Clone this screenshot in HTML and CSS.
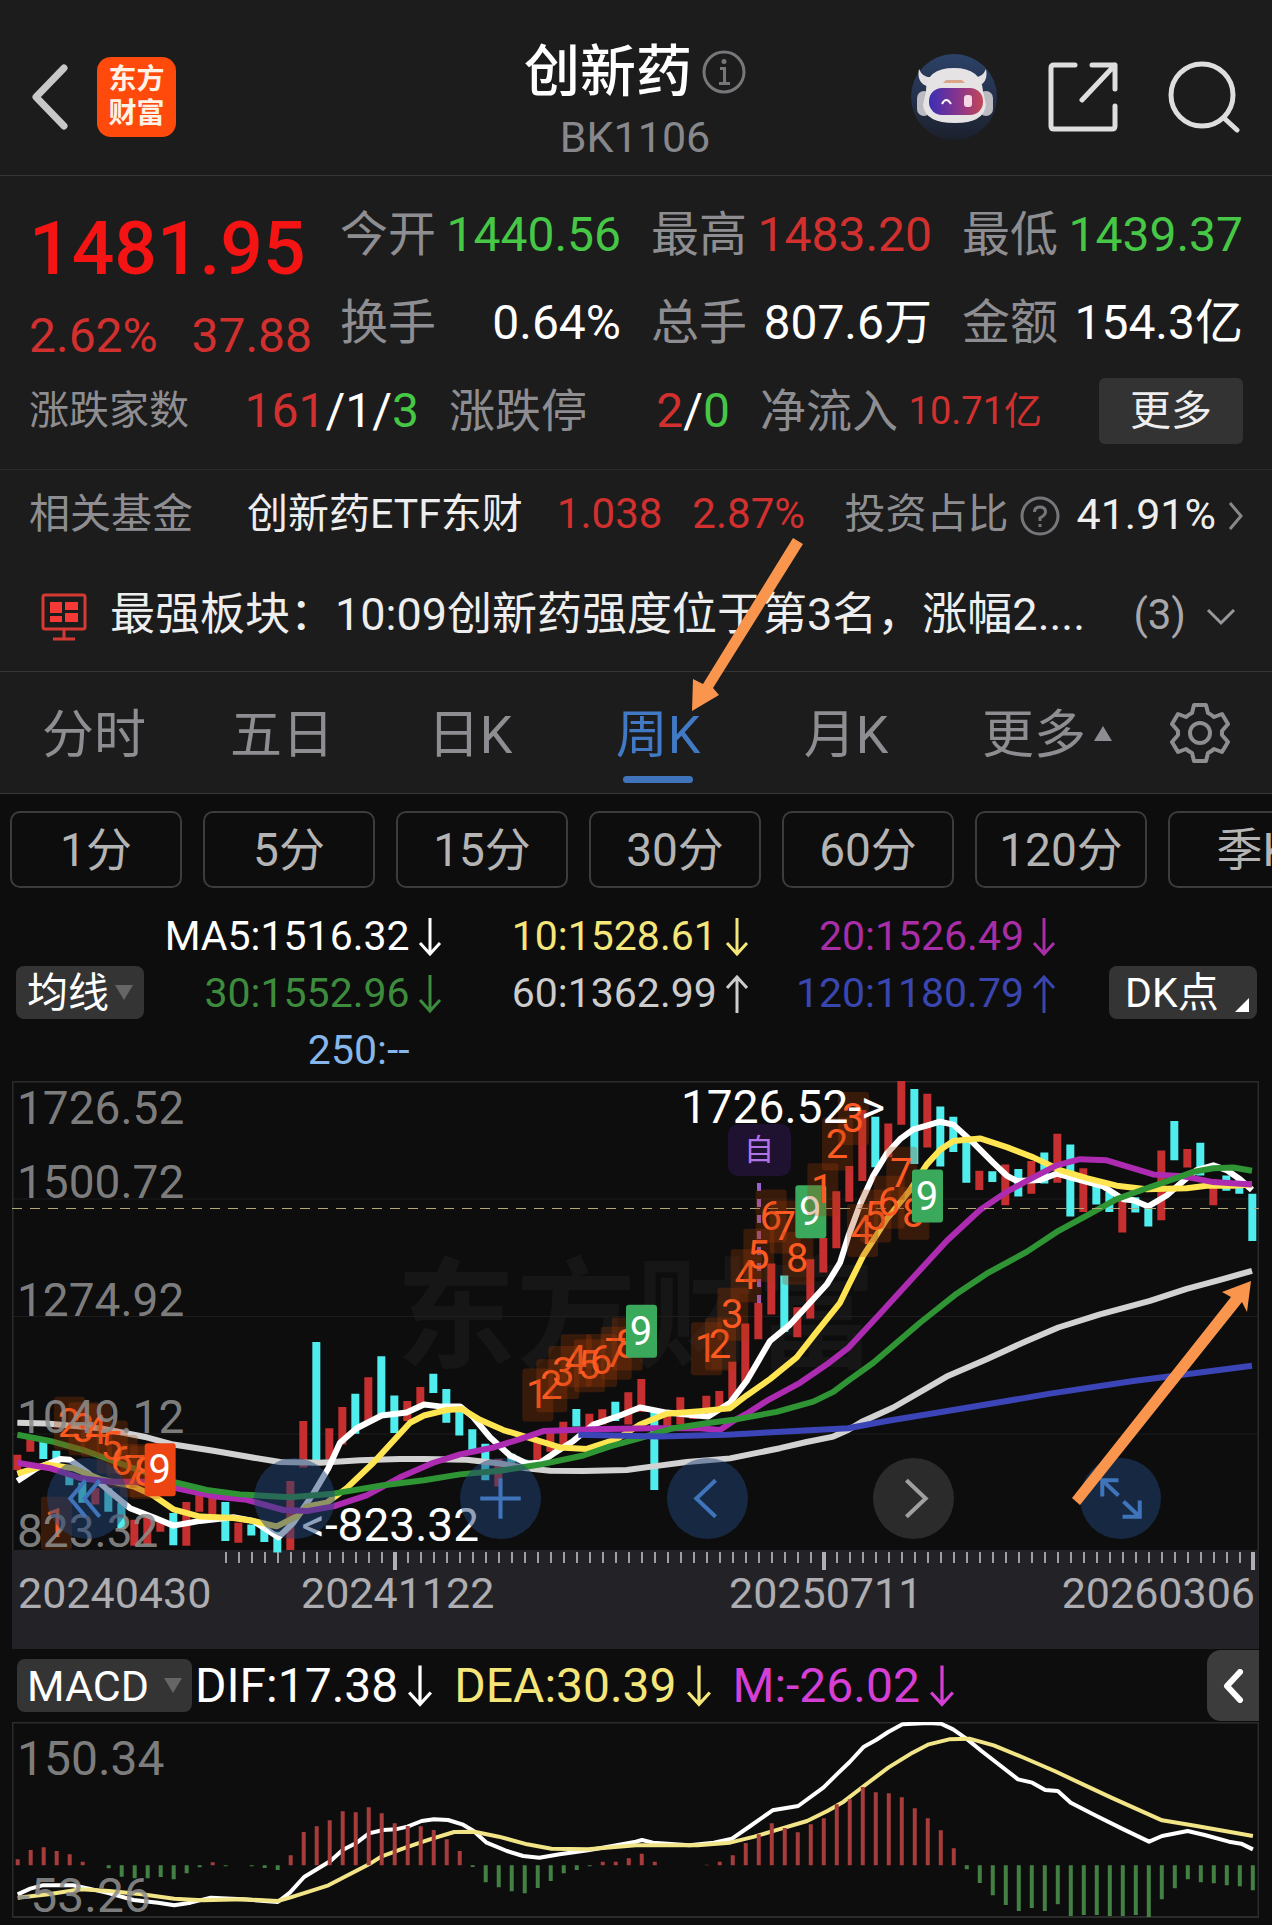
FILE: index.html
```html
<!DOCTYPE html>
<html lang="zh">
<head>
    <meta charset="UTF-8">
    <meta name="viewport" content="width=device-width, initial-scale=1">
    <title>创新药 BK1106</title>
    <link rel="stylesheet" href="styles.css">
</head>
<body>
<header class="topbar">
    <div class="topbar-left">
        <button class="icon-btn" aria-label="返回">
            <svg width="40" height="66" viewBox="0 0 40 66"><path d="M34 4L6 33L34 62" fill="none" stroke="#c8c8c8" stroke-width="7" stroke-linecap="round" stroke-linejoin="round"/></svg>
        </button>
        <div class="logo"><span>东方</span><span>财富</span></div>
    </div>
    <div class="topbar-title">
        <h1>创新药
            <svg width="44" height="44" viewBox="0 0 44 44" fill="none" stroke="#77777b" stroke-width="3"><circle cx="22" cy="22" r="20"/><path d="M18 18.500H22.500V33M17 33.500H28"/><circle cx="22" cy="11.500" r="1.500" fill="#77777b" stroke-width="2"/></svg>
        </h1>
        <p>BK1106</p>
    </div>
    <div class="topbar-right">
        <button class="icon-btn" aria-label="智能助手">
            <svg width="88" height="88" viewBox="0 0 88 88">
                <defs>
                    <linearGradient id="sky" x1="0" y1="0" x2="0" y2="1"><stop offset="0" stop-color="#2c4268"/><stop offset="1" stop-color="#1c202d"/></linearGradient>
                    <linearGradient id="visor" x1="0" y1="0" x2="1" y2="0"><stop offset="0" stop-color="#3a2fb4"/><stop offset=".55" stop-color="#8a358c"/><stop offset="1" stop-color="#c24758"/></linearGradient>
                </defs>
                <circle cx="44" cy="44" r="43" fill="url(#sky)"/>
                <path d="M9 16Q6 30 19 34L24 24Q13 26 9 16ZM76 16Q79 30 66 34L61 24Q72 26 76 16Z" fill="#e2e0e2"/>
                <rect x="7" y="38" width="14" height="25" rx="7" fill="#bdbbc2"/>
                <rect x="69" y="38" width="14" height="25" rx="7" fill="#bdbbc2"/>
                <path d="M16 38Q16 15 44 15Q71 15 73 38L76 52Q74 70 45 70Q15 70 13 52Z" fill="#e6e3e5"/>
                <path d="M36 27H52L55 30H33Z" fill="#d9a68c"/>
                <rect x="19" y="35" width="54" height="27" rx="13" fill="url(#visor)"/>
                <path d="M32 51Q36 43 41 51" fill="none" stroke="#fff" stroke-width="2"/>
                <rect x="54" y="42" width="8" height="12" rx="3" fill="#f5d7e4"/>
            </svg>
        </button>
        <button class="icon-btn" aria-label="分享">
            <svg width="70" height="70" viewBox="0 0 70 70" fill="none" stroke="#dedede" stroke-width="5" stroke-linecap="round" stroke-linejoin="round"><path d="M27 3H6Q3 3 3 6V64Q3 67 6 67H64Q67 67 67 64V44M44 3H67V27M67 3L34 38"/></svg>
        </button>
        <button class="icon-btn" aria-label="搜索">
            <svg width="72" height="72" viewBox="0 0 72 72" fill="none" stroke="#dedede" stroke-width="5" stroke-linecap="round"><circle cx="34" cy="34" r="31"/><path d="M56 57L69 69"/></svg>
        </button>
    </div>
</header>

<section class="quote">
    <div class="quote-main">
        <div class="price">
            <strong>1481.95</strong>
            <div class="change"><span>2.62%</span><span>37.88</span></div>
        </div>
        <dl class="stats">
            <div><dt>今开</dt><dd class="green">1440.56</dd></div>
            <div><dt>最高</dt><dd class="red">1483.20</dd></div>
            <div><dt>最低</dt><dd class="green">1439.37</dd></div>
            <div><dt>换手</dt><dd>0.64%</dd></div>
            <div><dt>总手</dt><dd>807.6万</dd></div>
            <div><dt>金额</dt><dd>154.3亿</dd></div>
        </dl>
    </div>
    <div class="breadth">
        <div class="pair pair-count"><span class="label small">涨跌家数</span><span><b class="red">161</b>/1/<b class="green">3</b></span></div>
        <div class="pair pair-limit"><span class="label">涨跌停</span><span><b class="red">2</b>/<b class="green">0</b></span></div>
        <div class="pair pair-flow"><span class="label">净流入</span><span class="red flow">10.71亿</span></div>
        <button class="more">更多</button>
    </div>
</section>

<section class="feed">
    <a class="fund" href="#fund">
        <span class="label">相关基金</span>
        <span class="fund-name">创新药ETF东财</span>
        <span class="red">1.038</span>
        <span class="red">2.87%</span>
        <span class="label fund-ratio">投资占比</span>
        <svg width="40" height="40" viewBox="0 0 40 40" fill="none" stroke="#77777b" stroke-width="3"><circle cx="20" cy="20" r="18"/><path d="M14.500 16Q14.500 11 20 11Q25.500 11 25.500 16Q25.500 19 20 22V25M20 28V31"/></svg>
        <span class="fund-value">41.91%</span>
        <svg width="16" height="30" viewBox="0 0 16 30" fill="none" stroke="#88888c" stroke-width="3"><path d="M2 2L13 15L2 28"/></svg>
    </a>
    <a class="news" href="#news">
        <svg width="46" height="48" viewBox="0 0 46 48" fill="none" stroke="#d63a35" stroke-width="3"><rect x="2" y="2" width="42" height="34" rx="2"/><path d="M23 36V45M12 46H34"/><path d="M9 9H21V20H9ZM24 9H37V17H24ZM9 23H21V29H9ZM24 20H37V29H24Z" fill="#f53a35" stroke="none"/></svg>
        <span class="news-text">最强板块：10:09创新药强度位于第3名，涨幅2....</span>
        <span class="news-count">(3)</span>
        <svg width="30" height="18" viewBox="0 0 30 18" fill="none" stroke="#98989c" stroke-width="3"><path d="M2 2L15 15L28 2"/></svg>
    </a>
</section>

<nav class="tabs">
    <button>分时</button>
    <button>五日</button>
    <button>日K</button>
    <button class="active">周K
        <svg class="arrow-note" width="120" height="176" viewBox="0 0 120 176"><path d="M105 1L115 7L25 151L31 158L4 174L5 142L15 147Z" fill="#f9954d"/></svg>
    </button>
    <button>月K</button>
    <button>更多<i class="caret-up"></i></button>
    <button class="settings" aria-label="设置">
        <svg width="60" height="60" viewBox="0 0 60 60" fill="none" stroke="#8e8e92" stroke-width="4" stroke-linejoin="round"><path d="M24 2H36L38 10Q42 12 44 14L52 11L58 21L52 28V32L58 39L52 49L44 46Q42 48 38 50L36 58H24L22 50Q18 48 16 46L8 49L2 39L8 32V28L2 21L8 11L16 14Q18 12 22 10Z"/><circle cx="30" cy="30" r="10"/></svg>
    </button>
</nav>

<main>
    <div class="periods">
        <button>1分</button>
        <button>5分</button>
        <button>15分</button>
        <button>30分</button>
        <button>60分</button>
        <button>120分</button>
        <button>季K</button>
    </div>

    <div class="legend">
        <button class="tag">均线<i class="caret-down"></i></button>
        <div class="ma">
            <span class="white">MA5:1516.32<svg><use href="#down"/></svg></span>
            <span class="yellow">10:1528.61<svg><use href="#down"/></svg></span>
            <span class="magenta">20:1526.49<svg><use href="#down"/></svg></span>
            <span class="ma-green">30:1552.96<svg><use href="#down"/></svg></span>
            <span class="grey">60:1362.99<svg><use href="#up"/></svg></span>
            <span class="blue">120:1180.79<svg><use href="#up"/></svg></span>
            <span class="sky">250:--<svg></svg></span>
        </div>
        <button class="tag tag-dk">DK点<i class="corner"></i></button>
    </div>

    <div class="kline">
        <svg class="chart" viewBox="0 0 1247 568">
            <rect class="axis-bg" y="469" width="1247" height="99"/>
            <text class="watermark" x="384" y="278">东方财富</text>
            <path class="grid" d="M0 118H1247M0 235.500H1247M0 353H1247"/>
            <path class="frame" d="M.5 469V.5H1246.500V469"/>
            <svg width="1247" height="469" viewBox="36 30 3741 1290" preserveAspectRatio="none" overflow="visible">
                <path id="up-bars" class="bar" stroke="#c52f2f"/>
                <path id="down-bars" class="bar" stroke="#4feded"/>
                <polyline class="line" stroke="#d2d2d2" points="52,970 140,972 300,985 440,1010 520,1030 640,1047 740,1063 840,1078 960,1080 1080,1073 1200,1070 1272,1070 1400,1072 1500,1082 1580,1095 1650,1102 1750,1103 1880,1100 1960,1090 2060,1078 2190,1068 2260,1055 2340,1040 2420,1023 2500,1008 2544,990 2584,968 2680,928 2840,843 2960,795 3080,745 3175,708 3300,672 3450,635 3560,602 3660,577 3756,552"/>
                <polyline class="line" stroke="#fff" points="52,1130 110,1095 180,1070 210,1072 260,1105 330,1160 390,1205 460,1230 520,1253 600,1240 700,1230 760,1240 835,1285 880,1245 940,1165 985,1095 1020,1025 1070,985 1145,950 1220,942 1272,920 1320,925 1380,925 1420,955 1470,1010 1530,1060 1580,1082 1620,1080 1660,1055 1720,1020 1780,975 1860,950 1920,928 2000,942 2090,950 2125,953 2190,915 2240,855 2310,745 2370,700 2430,640 2480,590 2520,530 2544,460 2580,370 2620,290 2660,230 2700,190 2740,163 2780,153 2820,142 2860,150 2920,200 2980,255 3020,290 3050,305 3120,302 3170,285 3230,300 3310,320 3370,355 3400,358 3445,375 3500,345 3550,305 3590,275 3640,262 3680,275 3720,300 3756,330"/>
                <polyline class="line" stroke="#ffe552" points="52,1110 140,1085 220,1095 300,1125 400,1145 460,1170 520,1208 600,1228 700,1232 760,1240 830,1255 890,1228 920,1200 980,1190 1040,1150 1120,1080 1190,1010 1230,970 1272,950 1340,935 1385,932 1440,962 1510,990 1600,1015 1680,1038 1760,1042 1850,1015 1920,975 2000,945 2100,938 2190,930 2240,895 2310,850 2390,790 2450,720 2520,640 2544,595 2590,510 2660,410 2730,330 2780,260 2820,220 2860,195 2940,188 3020,212 3100,240 3180,275 3260,297 3350,318 3440,328 3560,325 3620,318 3700,318 3756,315"/>
                <polyline class="line" stroke="#ad2bb0" points="52,1080 150,1095 240,1122 330,1132 430,1132 530,1150 640,1172 740,1182 850,1210 920,1213 1000,1200 1100,1170 1200,1120 1300,1080 1380,1057 1480,1038 1560,1015 1630,993 1780,988 1950,985 2100,985 2160,990 2200,965 2240,945 2300,910 2400,860 2480,810 2544,765 2640,670 2740,570 2840,470 2940,385 3020,335 3100,295 3170,262 3240,245 3320,248 3400,270 3460,287 3550,292 3640,308 3756,315"/>
                <polyline class="line" stroke="#2f9434" points="52,1003 150,1020 250,1045 400,1095 530,1135 620,1155 720,1167 870,1175 1000,1165 1150,1142 1272,1128 1380,1112 1500,1102 1620,1085 1750,1060 1830,1035 1920,1012 2020,985 2130,970 2200,962 2330,940 2440,912 2500,885 2544,855 2620,805 2760,695 2870,615 2960,560 3080,500 3170,445 3260,400 3350,355 3440,325 3520,300 3580,280 3640,270 3700,268 3756,277"/>
                <polyline class="line" stroke="#3b45b8" points="1735,1003 1980,1008 2180,1003 2400,992 2544,985 2660,965 2860,935 3150,890 3400,855 3600,832 3756,813"/>
            </svg>
            <path class="last-price" d="M0 127.500H1247"/>
            <path class="self-line" d="M747 102V222"/>
            <g id="marks"></g>
            <rect x="716" y="43" width="63" height="52" rx="10" fill="#1f1130"/>
            <text class="self" x="747" y="79">自</text>
            <g class="scale">
                <text x="5" y="43">1726.52</text>
                <text x="5" y="117">1500.72</text>
                <text x="5" y="235">1274.92</text>
                <text x="5" y="352">1049.12</text>
                <text x="5" y="466">823.32</text>
            </g>
            <text class="extreme" x="669" y="42">1726.52-&gt;</text>
            <text class="extreme end" x="467" y="460">&lt;-823.32</text>
            <path id="ticks" class="tick"/>
            <path class="tick major" d="M383 471V489M812 471V489M1241 471V489"/>
            <g class="dates">
                <text x="6" y="527">20240430</text>
                <text x="289" y="527">20241122</text>
                <text x="717" y="527">20250711</text>
                <text class="end" x="1243" y="527">20260306</text>
            </g>
        </svg>
        <div class="controls">
            <button aria-label="最早"><svg viewBox="0 0 80 80"><path d="M38 22L23 40L38 58M52 22L37 40L52 58"/></svg></button>
            <button aria-label="缩小"><svg viewBox="0 0 80 80"></svg></button>
            <button aria-label="放大"><svg viewBox="0 0 80 80"><path d="M20 40H60M40 20V60"/></svg></button>
            <button aria-label="前移"><svg viewBox="0 0 80 80"><path d="M48 22L29 40L48 58"/></svg></button>
            <button class="off" aria-label="后移"><svg viewBox="0 0 80 80"><path d="M33 22L52 40L33 58"/></svg></button>
            <button aria-label="全屏"><svg viewBox="0 0 80 80"><path d="M38 22H22V38M22 22L38 37M59 42V58H42M59 58L43 43"/></svg></button>
        </div>
        <svg class="chart overlay" viewBox="0 0 1247 568"><path d="M1060 417L1068 424L1230 221L1235 231L1239 200L1210 211L1219 216Z" fill="#f9954d"/></svg>
    </div>

    <div class="macd-head">
        <button class="tag">MACD<i class="caret-down"></i></button>
        <span class="white">DIF:17.38<svg><use href="#down"/></svg></span>
        <span class="yellow">DEA:30.39<svg><use href="#down"/></svg></span>
        <span class="pink">M:-26.02<svg><use href="#down"/></svg></span>
        <button class="drawer" aria-label="展开">
            <svg width="22" height="34" viewBox="0 0 22 34"><path d="M18 3L5 17L18 31" fill="none" stroke="#fff" stroke-width="6" stroke-linecap="round" stroke-linejoin="round"/></svg>
        </button>
    </div>

    <div class="macd">
        <svg class="chart" viewBox="0 0 1247 196">
            <path class="frame" d="M.5 .5H1246.500V195H.5Z"/>
            <svg width="1247" height="195" viewBox="30 248 3074 585" preserveAspectRatio="none">
                <path id="macd-down" class="macd-bar" stroke="#438043"/>
                <polyline class="line thin" stroke="#fff" points="44,765 75,748 105,738 180,738 220,748 270,762 330,782 390,790 430,798 470,790 520,775 600,780 685,788 715,760 750,713 815,665 845,632 880,610 910,582 945,572 975,570 1005,562 1040,545 1070,540 1105,542 1140,555 1168,575 1200,610 1250,635 1290,650 1330,655 1380,645 1450,633 1510,620 1568,607 1583,602 1610,610 1700,618 1760,610 1805,598 1850,560 1905,513 1968,500 2030,445 2065,403 2095,368 2130,322 2160,302 2190,278 2225,255 2290,251 2320,253 2350,270 2385,300 2420,335 2510,420 2545,430 2577,452 2608,455 2640,490 2700,528 2765,567 2833,607 2865,590 2928,575 2970,587 3030,607 3060,613 3089,630"/>
                <polyline class="line thin" stroke="#f2e587" points="44,775 120,765 200,750 270,755 350,765 430,778 500,783 600,780 685,785 715,775 810,738 910,675 940,652 1000,625 1060,600 1120,578 1170,577 1230,592 1300,615 1360,628 1450,630 1568,618 1720,618 1800,610 1860,592 1920,570 1990,545 2040,515 2080,487 2130,440 2190,385 2250,340 2290,315 2340,300 2390,298 2450,318 2520,353 2600,395 2670,435 2740,475 2865,543 2950,560 3089,590"/>
                <path id="macd-up" class="macd-bar" stroke="#a63c3c"/>
            </svg>
            <g class="scale">
                <text x="5" y="53">150.34</text>
                <text x="5" y="190">-53.26</text>
            </g>
        </svg>
    </div>
</main>

<svg width="0" height="0" class="symbols">
    <symbol id="down" viewBox="0 0 24 38"><path d="M12 0V36M2 25L12 36L22 25" fill="none" stroke="currentColor" stroke-width="3"/></symbol>
    <symbol id="up" viewBox="0 0 24 38"><path d="M12 38V2M2 13L12 2L22 13" fill="none" stroke="currentColor" stroke-width="3"/></symbol>
</svg>

<script>
    // r = 涨, c = 跌; 顶部、底部
    const candles = `r1058,1100 r1010,1050 c1020,1070 c1047,1092 c1110,1142 c1135,1190 r1150,1195 c1150,1215 c1190,1262 r1237,1308
        r1230,1305 r1240,1270 c1218,1307 r1188,1308 r1165,1215 r1170,1225 c1188,1295 r1245,1300 c1250,1280 c1262,1298
        c1270,1327 r1130,1320 r965,1093 c748,1075 r985,1070 r927,1030 c890,1000 r845,965 c787,950 c895,998
        r910,965 r872,920 c835,888 c877,970 c925,1005 c988,1050 c1028,1128 r1070,1145 c1055,1080 c1072,1085
        r1015,1075 r990,1050 r967,1040 c932,980 r945,990 r933,975 c912,965 r886,975 r850,940 c940,1155
        r940,980 r900,975 r935,960 r896,945 r883,935 r802,905 r697,860 r640,740 r532,672 c565,720
        r652,735 r520,683 r462,557 r333,490 r264,362 r110,305 c128,267 r147,240 r30,150 c52,258
        r65,213 c100,265 c128,225 c195,310 r277,330 c278,308 r260,372 c272,348 r250,340 c227,312
        r175,310 c205,403 r270,390 c310,370 c335,390 r355,447 c350,392 c380,430 r221,413 c140,248
        r217,268 c200,290 r300,372 c290,332 c300,340 c340,470`.split(/\s+/);

    const macd = [660, 632, 624, 635, 645, 667, 678, 687, 712, 717, 717, 713, 720, 702, 684, 669, 681, 678, 681, 686, 692,
        648, 578, 561, 543, 516, 519, 504, 522, 552, 560, 561, 572, 600, 635, 683, 729, 744, 756, 762, 746, 725, 702, 692,
        681, 667, 667, 657, 643, 667, 678, 678, 678, 676, 667, 648, 611, 585, 552, 566, 579, 555, 537, 495, 480, 443, 459,
        462, 474, 507, 537, 573, 627, 690, 731, 768, 797, 815, 806, 815, 795, 830, 827, 827, 830, 830, 827, 833, 780, 747,
        720, 729, 732, 738, 741, 753];

    // 九转序列: x, y, 数字, 样式
    const marks = [
        [168, 1245, 1], [207, 970, 2], [250, 985, 3], [288, 990, 4], [335, 1035, 5], [365, 1075, 6], [405, 1100, 7], [435, 1105, 8], [479, 1098, 9, `sell`],
        [1612, 892, 1], [1654, 867, 2], [1690, 830, 3], [1727, 798, 4], [1767, 812, 5], [1803, 797, 6], [1847, 777, 7], [1880, 752, 8], [1923, 717, 9, `buy`],
        [2118, 765, 1], [2160, 752, 2], [2197, 670, 3], [2237, 564, 4], [2275, 508, 5], [2312, 400, 6], [2354, 430, 7], [2392, 516, 8], [2431, 388, 9, `buy`],
        [2467, 328, 1], [2511, 202, 2], [2559, 132, 3], [2586, 440, 4], [2626, 400, 5], [2666, 362, 6], [2704, 282, 7], [2740, 392, 8], [2781, 345, 9, `buy`]
    ];

    function drawCandles() {
        let up = ``, down = ``;
        candles.forEach((item, i) => {
            const [top, bottom] = item.slice(1).split(`,`);
            const d = `M${52 + i * 39} ${top}V${bottom}`;
            if (item[0] === `r`) up += d; else down += d;
        });
        $(`up-bars`).setAttribute(`d`, up);
        $(`down-bars`).setAttribute(`d`, down);
    }

    function drawMacd() {
        let up = ``, down = ``;
        macd.forEach((y, i) => {
            if (y === 678) return;
            const d = `M${44 + i * 32.05} 678V${y}`;
            if (y < 678) up += d; else down += d;
        });
        $(`macd-up`).setAttribute(`d`, up);
        $(`macd-down`).setAttribute(`d`, down);
    }

    function drawMarks() {
        $(`marks`).innerHTML = marks.map(([mx, my, n, type = `count`]) => {
            const x = (mx - 36) / 3, y = (my - 30) / 2.75;
            return `<g class="${type}"><rect x="${x - 15}" y="${y - 26}" width="31" height="53" rx="3"/><text x="${x}" y="${y + 14}">${n}</text></g>`;
        }).join(``);
    }

    function drawTicks() {
        let d = ``;
        for (let x = 214; x < 1241; x += 13) d += `M${x} 471V482`;
        $(`ticks`).setAttribute(`d`, d);
    }

    function $(id) {
        return document.getElementById(id);
    }

    drawCandles();
    drawMacd();
    drawMarks();
    drawTicks();
</script>
</body>
</html>
```
FILE: styles.css
```css
* {
    box-sizing: border-box;
}

body {
    margin: 0;
    background: #0d0d0d;
    color: #fff;
    font-family: Roboto, "Noto Sans CJK SC", sans-serif;
    font-size: 48px;
    overflow-x: hidden;
}

button {
    padding: 0;
    border: none;
    background: none;
    color: inherit;
    font: inherit;
    cursor: pointer;
}

a {
    color: inherit;
    text-decoration: none;
}

h1, p, dl, dd {
    margin: 0;
    font-weight: normal;
}

b {
    font-weight: normal;
}

svg {
    flex: none;
}

.symbols {
    position: absolute;
}

.red { color: #d2302f; }
.green { color: #46c846; }
.white { color: #fff; }
.yellow { color: #f5e67a; }
.magenta { color: #a82ea8; }
.ma-green { color: #3d8b3d; }
.grey { color: #ccc; }
.blue { color: #3a46b0; }
.sky { color: #86b6ea; }
.pink { color: #d63fd6; }

.label {
    color: #8e8e92;
}

/* header */
.topbar {
    display: grid;
    grid-template-columns: 1fr auto 1fr;
    align-items: center;
    height: 176px;
    padding: 18px 32px 0 30px;
    background: #1c1c1c;
    border-bottom: 1px solid #363636;
}

.topbar-left, .topbar-right {
    display: flex;
    align-items: center;
}

.topbar-left {
    gap: 27px;
}

.topbar-right {
    justify-content: flex-end;
    gap: 50px;
}

.icon-btn {
    display: flex;
}

.logo {
    display: flex;
    flex-direction: column;
    justify-content: center;
    width: 79px;
    height: 80px;
    border-radius: 14px;
    background: #ff4a0c;
    color: #fff3e8;
    font-size: 28px;
    font-weight: bold;
    line-height: 34px;
    text-align: center;
}

.topbar-title {
    text-align: center;
}

.topbar-title h1 {
    display: flex;
    align-items: center;
    gap: 10px;
    padding-top: 4px;
    font-size: 56px;
    font-weight: 500;
    line-height: 76px;
}

.topbar-title p {
    color: #88888c;
    font-size: 43px;
    line-height: 54px;
}

/* quote */
.quote {
    height: 294px;
    padding: 15px 29px 14px;
    background: #1c1c1c;
    border-bottom: 1px solid #2a2a2a;
}

.quote-main {
    display: flex;
}

.price {
    flex: none;
    width: 311px;
    color: #f51414;
}

.price strong {
    display: block;
    font-size: 75px;
    font-weight: 500;
    line-height: 114px;
}

.change {
    display: flex;
    justify-content: space-between;
    padding-right: 28px;
    color: #d2302f;
    line-height: 62px;
}

.stats {
    flex: 1;
    display: grid;
    grid-template-columns: repeat(3, 1fr);
    column-gap: 30px;
}

.stats div {
    display: flex;
    justify-content: space-between;
    line-height: 88px;
    white-space: nowrap;
}

.stats dt {
    color: #8e8e92;
}

.breadth {
    display: flex;
    align-items: center;
    height: 88px;
    line-height: 88px;
    white-space: nowrap;
}

.pair {
    display: flex;
    justify-content: space-between;
    margin-right: 30px;
}

.pair .label {
    font-size: 46px;
}

.pair .small {
    font-size: 40px;
}

.pair-count {
    width: 390px;
}

.pair-limit {
    width: 281px;
}

.pair-flow {
    width: 282px;
}

.pair .flow {
    font-size: 38px;
}

.more {
    width: 144px;
    height: 66px;
    margin-left: auto;
    border-radius: 6px;
    background: #333;
    color: #eee;
    font-size: 41px;
    line-height: 60px;
}

/* fund + news */
.feed {
    background: #1c1c1c;
    border-bottom: 1px solid #363636;
    white-space: nowrap;
}

.fund, .news {
    display: flex;
    align-items: center;
}

.fund {
    height: 92px;
    padding: 0 28px 0 29px;
    font-size: 41px;
    line-height: 88px;
}

.fund span, .news span {
    padding-bottom: 4px;
}

.fund-name {
    margin: 0 34px 0 54px;
    color: #eee;
}

.fund .red {
    font-size: 42px;
}

.fund .red + .red {
    margin-left: 30px;
}

.fund-ratio {
    margin-left: auto;
    margin-right: 11px;
}

.fund .fund-value {
    margin: 0 12px 0 17px;
    color: #eee;
    font-size: 43px;
}

.news {
    height: 109px;
    padding: 0 36px 0 41px;
    font-size: 45px;
    line-height: 100px;
}

.news-text {
    flex: 1;
    margin-left: 23px;
    overflow: hidden;
    color: #eee;
}

.news-count {
    margin-right: 20px;
    color: #a8a8ac;
    font-size: 42px;
}

/* tabs */
.tabs {
    display: flex;
    height: 122px;
    background: #1c1c1c;
    border-bottom: 1px solid #363636;
    color: #8e8e92;
    font-size: 52px;
}

.tabs button {
    position: relative;
    flex: 1;
    padding-bottom: 5px;
}

.tabs .settings {
    flex: none;
    width: 144px;
    padding: 0;
}

.settings svg {
    display: block;
    margin: auto;
}

.tabs .active {
    color: #4179c4;
}

.active::after {
    content: "";
    position: absolute;
    bottom: 10px;
    left: 50%;
    width: 70px;
    height: 7px;
    margin-left: -35px;
    border-radius: 4px;
    background: #3f74bb;
}

.arrow-note {
    position: absolute;
    left: calc(50% + 30px);
    bottom: 80px;
    z-index: 2;
}

.caret-up {
    position: absolute;
    top: 54px;
    left: calc(50% + 60px);
    border: 9px solid transparent;
    border-top: none;
    border-bottom: 15px solid #8e8e92;
}

/* periods */
.periods {
    display: flex;
    gap: 21px;
    padding: 17px 0 19px 10px;
    overflow: hidden;
}

.periods button {
    flex: none;
    width: 172px;
    height: 77px;
    border: 2px solid #3c3c3c;
    border-radius: 10px;
    color: #b4b4b4;
    font-size: 46px;
    line-height: 70px;
}

/* moving averages */
.legend {
    display: flex;
    align-items: center;
    height: 174px;
    padding: 0 15px 3px 16px;
    font-size: 41px;
}

.tag {
    display: flex;
    align-items: center;
    justify-content: center;
    gap: 6px;
    flex: none;
    width: 128px;
    height: 53px;
    border-radius: 8px;
    background: #343434;
    color: #fff;
    line-height: 50px;
}

.tag-dk {
    position: relative;
    justify-content: flex-start;
    width: 148px;
    padding-left: 16px;
}

.caret-down {
    border: 9px solid transparent;
    border-bottom: none;
    border-top: 15px solid #666;
}

.corner {
    position: absolute;
    right: 8px;
    bottom: 7px;
    border-left: 14px solid transparent;
    border-bottom: 14px solid #fff;
}

.ma {
    flex: 1;
    display: grid;
    grid-template-columns: 31fr 32fr 32fr;
    margin-right: 53px;
    padding-top: 2px;
    line-height: 57px;
    white-space: nowrap;
}

.ma span {
    display: flex;
    align-items: center;
    justify-content: flex-end;
    gap: 8px;
}

.ma svg {
    width: 24px;
    height: 38px;
}

/* charts */
.kline {
    position: relative;
    margin: 0 13px 0 12px;
}

.chart {
    display: block;
    width: 100%;
    height: auto;
}

.overlay {
    position: absolute;
    inset: 0;
    pointer-events: none;
}

.axis-bg {
    fill: #232327;
}

.frame {
    fill: none;
    stroke: #2b2b2b;
    stroke-width: 2;
}

.grid {
    stroke: #1d1d1d;
    stroke-width: 1;
}

.watermark {
    fill: #161616;
    font-size: 120px;
    font-weight: bold;
}

.bar, .line, .macd-bar {
    fill: none;
    vector-effect: non-scaling-stroke;
}

.bar {
    stroke-width: 8;
}

.macd-bar {
    stroke-width: 4;
}

.line {
    stroke-width: 6;
    stroke-linejoin: round;
}

.thin {
    stroke-width: 4;
}

.last-price {
    stroke: #b5a878;
    stroke-dasharray: 10 8;
}

.self-line {
    stroke: #9a62d0;
    stroke-width: 4;
    stroke-dasharray: 8 8;
}

.self {
    fill: #b273e6;
    font-size: 30px;
    text-anchor: middle;
}

#marks text {
    font-size: 40px;
    text-anchor: middle;
}

.count rect {
    fill: #a83c08;
    fill-opacity: .28;
}

.count text {
    fill: #ff5a22;
}

.buy rect {
    fill: #3aa95c;
}

.sell rect {
    fill: #ec4412;
}

.buy text, .sell text {
    fill: #fff;
}

.scale {
    fill: #8c8c8c;
    fill-opacity: .9;
    font-size: 46px;
}

.macd .scale {
    font-size: 48px;
}

.extreme {
    fill: #fff;
    font-size: 46px;
}

.end {
    text-anchor: end;
}

.tick {
    stroke: #a0a0a4;
    stroke-width: 2;
}

.major {
    stroke: #b0b0b4;
    stroke-width: 4;
}

.dates {
    fill: #adadb2;
    font-size: 43px;
}

.controls {
    position: absolute;
    top: 377px;
    left: 35px;
    right: 98px;
    display: flex;
    justify-content: space-between;
}

.controls button {
    width: 81px;
    height: 81px;
    border-radius: 50%;
    background: rgba(34, 68, 120, .5);
}

.controls .off {
    background: #2b2b2b;
}

.controls svg {
    display: block;
    fill: none;
    stroke: #3f74bb;
    stroke-width: 4;
}

.controls .off svg {
    stroke: #a0a0a0;
}

/* macd */
.macd-head {
    display: flex;
    align-items: center;
    height: 73px;
    padding: 0 13px 0 17px;
    font-size: 48px;
    white-space: nowrap;
}

.macd-head .tag {
    gap: 15px;
    width: 175px;
    margin-right: 3px;
    font-size: 43px;
}

.macd-head span {
    display: flex;
    align-items: center;
    gap: 9px;
    margin-right: 21px;
}

.macd-head span svg {
    width: 26px;
    height: 42px;
}

.drawer {
    display: flex;
    align-items: center;
    justify-content: center;
    width: 52px;
    height: 71px;
    margin-left: auto;
    border-radius: 14px 0 0 14px;
    background: #3c3c3c;
}

.macd {
    margin: 0 13px 6px 12px;
}
```
